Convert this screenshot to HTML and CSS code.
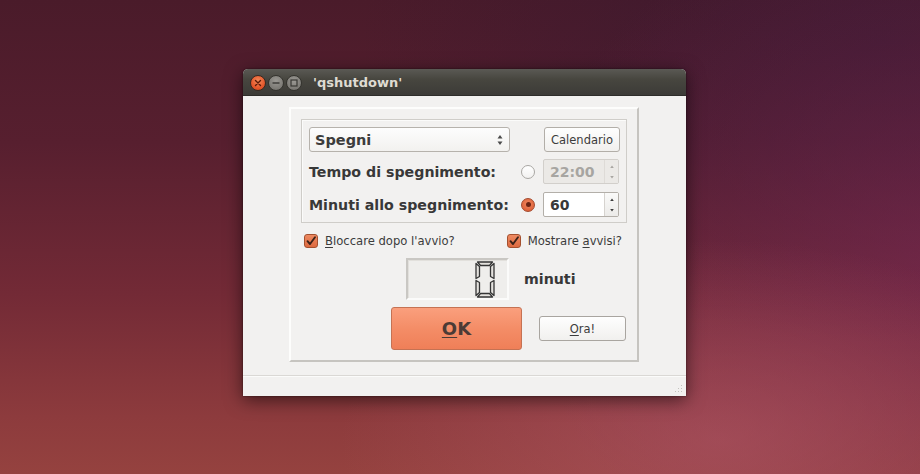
FILE: index.html
```html
<!DOCTYPE html>
<html lang="it">
<head>
<meta charset="utf-8">
<title>qshutdown</title>
<link rel="stylesheet" href="styles.css">
</head>
<body>
<div class="desktop">
  <div class="window">
    <div class="titlebar">
      <span class="wbtn close"><svg width="8" height="8" viewBox="0 0 8 8"><path d="M1.5 1.5L6.5 6.5M6.5 1.5L1.5 6.5" stroke="#5a1a08" stroke-width="1.4" stroke-linecap="round"/></svg></span>
      <span class="wbtn mini"><svg width="8" height="8" viewBox="0 0 8 8"><path d="M0.5 4H7.5" stroke="#3a3935" stroke-width="1.4"/></svg></span>
      <span class="wbtn maxi"><svg width="8" height="8" viewBox="0 0 8 8"><rect x="1" y="1" width="6" height="6" fill="none" stroke="#3a3935" stroke-width="1.2"/></svg></span>
      <span class="wtitle">'qshutdown'</span>
    </div>
    <div class="wbody">
      <div class="frame">
        <div class="group">
          <div class="row">
            <div class="combo"><span>Spegni</span>
              <svg class="updown" width="6" height="12" viewBox="0 0 6 12"><path d="M3 1L5.5 4.5H0.5Z M3 11L5.5 7.5H0.5Z" fill="#4a4a4a"/></svg>
            </div>
            <div class="btn cal">Calendario</div>
          </div>
          <div class="row">
            <span class="lbl">Tempo di spegnimento:</span>
            <span class="radio"></span>
            <div class="spin disabled"><span class="val">22:00</span>
              <span class="arrows"><svg width="6" height="18" viewBox="0 0 6 18"><path d="M3 2.5L4.8 5H1.2Z M3 15.5L4.8 13H1.2Z" fill="#a8a6a2"/></svg></span>
            </div>
          </div>
          <div class="row">
            <span class="lbl">Minuti allo spegnimento:</span>
            <span class="radio on"><span class="dot"></span></span>
            <div class="spin"><span class="val">60</span>
              <span class="arrows"><svg width="6" height="18" viewBox="0 0 6 18"><path d="M3 2.5L4.8 5H1.2Z M3 15.5L4.8 13H1.2Z" fill="#3c3c3c"/></svg></span>
            </div>
          </div>
        </div>
        <div class="checks">
          <label class="chk"><span class="box"><svg width="12" height="12" viewBox="0 0 12 12"><path d="M2.5 6.2L5 9L10 2.2" fill="none" stroke="#3b2219" stroke-width="1.9" stroke-linecap="round" stroke-linejoin="round"/></svg></span><span><u>B</u>loccare dopo l'avvio?</span></label>
          <label class="chk"><span class="box"><svg width="12" height="12" viewBox="0 0 12 12"><path d="M2.5 6.2L5 9L10 2.2" fill="none" stroke="#3b2219" stroke-width="1.9" stroke-linecap="round" stroke-linejoin="round"/></svg></span><span>Mostrare <u>a</u>vvisi?</span></label>
        </div>
        <div class="lcdrow">
          <div class="lcd">
            <svg width="20" height="37" viewBox="0 0 20 37">
              <g fill="#e4e2de" stroke="#353535" stroke-width="1.3" stroke-linejoin="round">
                <polygon points="2.5,1 17.5,1 14.5,4.5 5.5,4.5"/>
                <polygon points="1,2.5 4.5,5.5 4.5,15.5 1,17.5"/>
                <polygon points="19,2.5 19,17.5 15.5,15.5 15.5,5.5"/>
                <polygon points="1,19.5 4.5,21.5 4.5,31.5 1,34.5"/>
                <polygon points="19,19.5 19,34.5 15.5,31.5 15.5,21.5"/>
                <polygon points="2.5,36 5.5,32.5 14.5,32.5 17.5,36"/>
              </g>
            </svg>
          </div>
          <span class="minuti">minuti</span>
        </div>
        <div class="btnrow">
          <div class="okbtn"><u>O</u>K</div>
          <div class="btn ora"><u>O</u>ra!</div>
        </div>
      </div>
    </div>
    <div class="status">
      <svg class="grip" width="8" height="8" viewBox="0 0 8 8"><g fill="#c4c2be"><rect x="6" y="0" width="1" height="1"/><rect x="6" y="3" width="1" height="1"/><rect x="3" y="3" width="1" height="1"/><rect x="6" y="6" width="1" height="1"/><rect x="3" y="6" width="1" height="1"/><rect x="0" y="6" width="1" height="1"/></g></svg>
    </div>
  </div>
</div>
</body>
</html>
```
FILE: styles.css
```css
* { box-sizing: border-box; }
html, body { margin: 0; padding: 0; }
body {
  width: 920px;
  height: 474px;
  overflow: hidden;
  font-family: "DejaVu Sans", "Liberation Sans", sans-serif;
}
.desktop {
  width: 920px;
  height: 474px;
  padding: 69px 0 0 243px;
  background:
    radial-gradient(ellipse 380px 200px at 720px 440px, rgba(178, 88, 104, 0.55), rgba(178, 88, 104, 0) 100%),
    radial-gradient(ellipse 420px 360px at 940px 260px, rgba(120, 40, 85, 0.55), rgba(120, 40, 85, 0) 100%),
    radial-gradient(ellipse 520px 300px at 880px 40px, rgba(55, 24, 50, 0.7), rgba(55, 24, 50, 0) 100%),
    linear-gradient(180deg, #4a1b2a 0%, #571f2f 30%, #732a36 62%, #8d3b3d 88%, #95423f 100%);
}
.window {
  width: 443px;
  height: 327px;
  display: flex;
  flex-direction: column;
  border-radius: 5px 5px 0 0;
  box-shadow: 0 4px 18px rgba(0, 0, 0, 0.55), 0 0 2px rgba(0, 0, 0, 0.6);
  background: #f2f1f0;
}
.titlebar {
  height: 27px;
  flex: none;
  display: flex;
  align-items: center;
  padding: 1px 0 0 7px;
  border-radius: 5px 5px 0 0;
  background: linear-gradient(180deg, #5a5954 0%, #47463f 40%, #3c3b37 100%);
  border-bottom: 1px solid #2e2d2a;
}
.wbtn {
  width: 16px;
  height: 16px;
  border-radius: 50%;
  display: flex;
  align-items: center;
  justify-content: center;
  margin-right: 2px;
}
.wbtn.close {
  background: radial-gradient(circle at 50% 35%, #f28a5a 0%, #e5572b 60%, #c6441c 100%);
  border: 1px solid #3a2a22;
}
.wbtn.mini, .wbtn.maxi {
  background: radial-gradient(circle at 50% 35%, #9a9893 0%, #807e79 60%, #6d6b66 100%);
  border: 1px solid #35342f;
}
.wtitle {
  margin-left: 9px;
  color: #dfdbd2;
  font-size: 13px;
  font-weight: bold;
}
.wbody {
  flex: 1;
  padding: 11px 0 0 46px;
}
.frame {
  width: 350px;
  height: 255px;
  border: 2px solid;
  border-color: #fdfdfc #c6c4c0 #c6c4c0 #fdfdfc;
  padding: 10px;
  display: flex;
  flex-direction: column;
}
.group {
  height: 104px;
  border: 1px solid #cfcdc9;
  box-shadow: inset 1px 1px 0 #fbfbfa;
  padding: 7px 7px 0 7px;
  display: flex;
  flex-direction: column;
  gap: 7px;
}
.row {
  height: 25px;
  display: flex;
  align-items: center;
}
.row + .row + .row { margin-top: 1px; }
.combo {
  width: 201px;
  height: 25px;
  border: 1px solid #b6b2ac;
  border-radius: 3px;
  background: linear-gradient(180deg, #fdfdfd 0%, #f2f1ef 100%);
  display: flex;
  align-items: center;
  justify-content: space-between;
  padding: 0 6px 0 5px;
  font-weight: bold;
  font-size: 14.5px;
  color: #3c3c3c;
}
.updown { display: block; }
.btn {
  height: 25px;
  border: 1px solid #b2aea8;
  border-radius: 3px;
  background: linear-gradient(180deg, #fefefe 0%, #f1f0ee 100%);
  display: flex;
  align-items: center;
  justify-content: center;
  font-size: 11.5px;
  color: #3c3c3c;
}
.cal {
  width: 76px;
  margin-left: auto;
  margin-right: -1px;
}
.lbl {
  flex: 1;
  font-weight: bold;
  font-size: 14.2px;
  color: #383838;
}
.radio {
  width: 14px;
  height: 14px;
  border-radius: 50%;
  border: 1px solid #a9a7a3;
  background: linear-gradient(180deg, #ffffff 0%, #f2f1f0 100%);
  margin-right: 8px;
  display: flex;
  align-items: center;
  justify-content: center;
}
.radio.on {
  border-color: #a34a2e;
  background: radial-gradient(circle at 50% 40%, #f08a62 0%, #e0643c 70%, #cf5530 100%);
}
.dot {
  width: 5px;
  height: 5px;
  border-radius: 50%;
  background: #6b2414;
}
.spin {
  width: 76px;
  height: 25px;
  border: 1px solid #b3afa9;
  border-radius: 2px;
  background: #ffffff;
  display: flex;
  align-items: stretch;
}
.spin .val {
  flex: 1;
  display: flex;
  align-items: center;
  padding-left: 6px;
  font-weight: bold;
  font-size: 14px;
  color: #383838;
}
.spin .arrows {
  width: 14px;
  border-left: 1px solid #d6d3cf;
  background: linear-gradient(180deg, #fafaf9 0%, #ecebe9 100%);
  display: flex;
  align-items: center;
  justify-content: center;
}
.spin.disabled {
  border-color: #d2cfcb;
  background: #ebe9e6;
}
.spin.disabled .val { color: #a7a5a1; }
.spin.disabled .arrows {
  background: #ebe9e6;
  border-left-color: #dedbd7;
}
.checks {
  height: 20px;
  margin-top: 8px;
  display: flex;
  align-items: center;
  justify-content: space-between;
  padding: 0 5px 0 3px;
}
.chk {
  display: flex;
  align-items: center;
  gap: 7px;
  font-size: 11.6px;
  color: #3c3c3c;
}
.box {
  width: 14px;
  height: 14px;
  border: 1px solid #a4502f;
  border-radius: 3px;
  background: linear-gradient(180deg, #ee8a62 0%, #dd6a40 100%);
  display: flex;
  align-items: center;
  justify-content: center;
}
.box svg { display: block; }
u { text-decoration-thickness: 1px; text-underline-offset: 2px; }
.lcdrow {
  height: 42px;
  margin-top: 7px;
  display: flex;
  align-items: center;
  padding-left: 105px;
}
.lcd {
  width: 103px;
  height: 42px;
  border: 2px solid;
  border-color: #c9c7c3 #fbfbfa #fbfbfa #c9c7c3;
  box-shadow: inset 1px 1px 0 #e2e0dc;
  background: #efeeec;
  display: flex;
  align-items: center;
  justify-content: flex-end;
  padding-right: 12px;
}
.lcd svg { display: block; }
.minuti {
  margin-left: 15px;
  font-weight: bold;
  font-size: 14.2px;
  color: #383838;
}
.btnrow {
  height: 43px;
  margin-top: 7px;
  display: flex;
  align-items: center;
  padding-left: 90px;
}
.okbtn {
  width: 131px;
  height: 43px;
  border: 1px solid #c57253;
  border-radius: 3px;
  background: linear-gradient(180deg, #fa9f7d 0%, #f48d67 50%, #ef7f58 100%);
  display: flex;
  align-items: center;
  justify-content: center;
  font-weight: bold;
  font-size: 18px;
  color: #4b3b36;
}
.ora {
  width: 87px;
  height: 25px;
  margin-left: 17px;
  border-color: #a9a5a0;
}
.status {
  height: 21px;
  flex: none;
  border-top: 1px solid #dad8d5;
  box-shadow: inset 0 1px 0 #fbfbfa;
  display: flex;
  justify-content: flex-end;
  align-items: flex-end;
  padding: 0 3px 3px 0;
}
.grip { display: block; }
```
